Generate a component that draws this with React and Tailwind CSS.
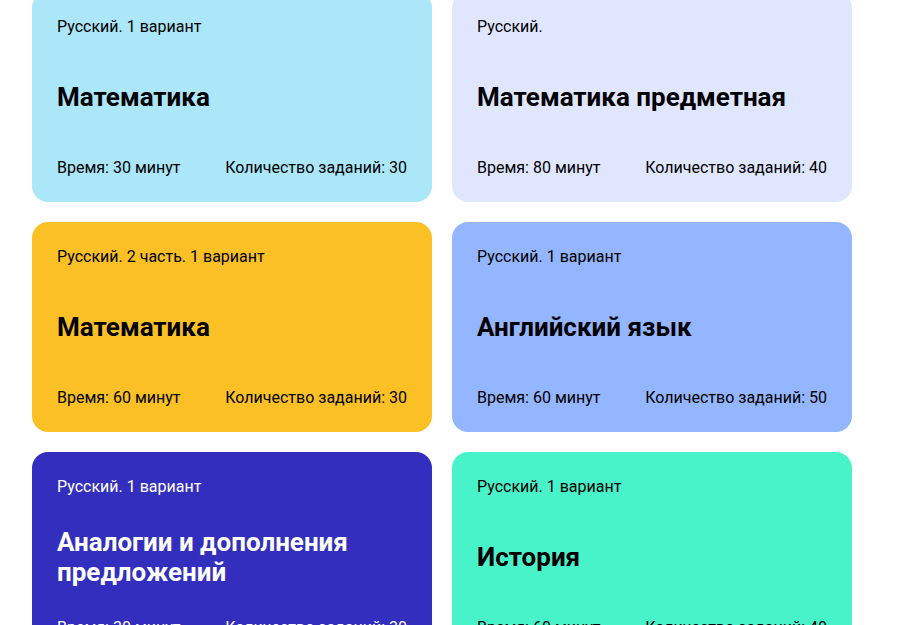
const tests = [
  { lang: 'Русский. 1 вариант', title: 'Математика', time: 30, count: 30, bg: 'bg-[#abe6f9]', text: 'text-black' },
  { lang: 'Русский.', title: 'Математика предметная', time: 80, count: 40, bg: 'bg-[#e1e6ff]', text: 'text-black' },
  { lang: 'Русский. 2 часть. 1 вариант', title: 'Математика', time: 60, count: 30, bg: 'bg-[#fcc027]', text: 'text-black' },
  { lang: 'Русский. 1 вариант', title: 'Английский язык', time: 60, count: 50, bg: 'bg-[#94b5ff]', text: 'text-black' },
  { lang: 'Русский. 1 вариант', title: 'Аналогии и дополнения предложений', time: 30, count: 30, bg: 'bg-[#332ebd]', text: 'text-white' },
  { lang: 'Русский. 1 вариант', title: 'История', time: 60, count: 40, bg: 'bg-[#49f3ca]', text: 'text-black' },
];

const TestCard = ({ test }) => (
  <div className={`h-[210px] rounded-2xl px-[25px] py-[25px] flex flex-col justify-between ${test.bg} ${test.text}`}>
    <p className="text-base leading-[19px]">{test.lang}</p>
    <h3 className="text-[26px] leading-[30px] font-bold pr-10">{test.title}</h3>
    <div className="flex justify-between text-base leading-[19px]">
      <span>Время: {test.time} минут</span>
      <span>Количество заданий: {test.count}</span>
    </div>
  </div>
);

export default function App() {
  return (
    <div className="h-[625px] overflow-hidden bg-white font-['Roboto',sans-serif]">
      <div className="grid grid-cols-[400px_400px] gap-5 pl-8 -mt-2">
        {tests.map((t, i) => (
          <TestCard key={i} test={t} />
        ))}
      </div>
    </div>
  );
}
